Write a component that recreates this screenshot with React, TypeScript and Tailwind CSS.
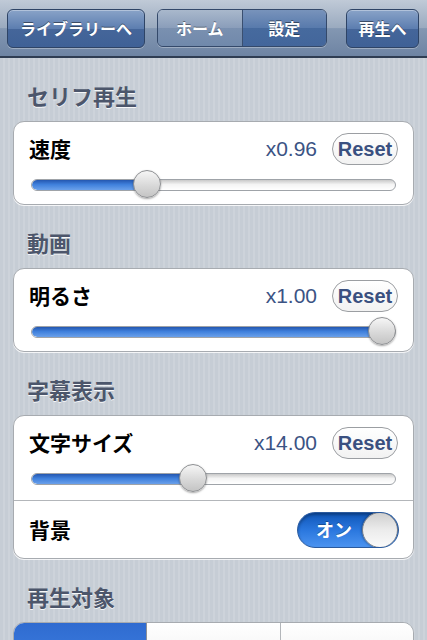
import type { ReactNode } from "react";

const JP = "font-['Noto_Sans_CJK_JP','Noto_Sans',sans-serif]";
const HV = "font-['Liberation_Sans','Noto_Sans_CJK_JP',sans-serif]";

function NavButton({ children, className = "" }: { children: ReactNode; className?: string }) {
  return (
    <button
      className={`${JP} h-[39px] rounded-[6px] border border-[#2e4466] bg-[linear-gradient(180deg,#89a3c8_0%,#5d7eb0_50%,#45669a_51%,#3f6196_100%)] text-[16px] font-bold text-white shadow-[inset_0_1px_0_rgba(255,255,255,0.35),0_1px_0_rgba(255,255,255,0.3)] [text-shadow:0_-1px_0_rgba(0,0,0,0.45)] ${className}`}
    >
      {children}
    </button>
  );
}

function NavBar() {
  return (
    <div className="flex h-[58px] items-center border-b-2 border-[#2f3d52] bg-[linear-gradient(180deg,#c0cad7_0%,#9aaabf_50%,#8397b2_51%,#6e84a3_100%)] px-[7px]">
      <NavButton className="w-[138px]">ライブラリーへ</NavButton>
      <div className="ml-[12px] flex h-[38px] w-[170px] overflow-hidden rounded-[6px] border border-[#34496a] shadow-[0_1px_0_rgba(255,255,255,0.3)]">
        <div
          className={`${JP} flex flex-1 items-center justify-center border-r border-[#3a4f70] bg-[linear-gradient(180deg,#a9b8cc_0%,#8a9dba_50%,#7a90b0_51%,#7089ab_100%)] text-[16px] font-bold text-white [text-shadow:0_-1px_0_rgba(0,0,0,0.4)]`}
        >
          ホーム
        </div>
        <div
          className={`${JP} flex flex-1 items-center justify-center bg-[linear-gradient(180deg,#7893bb_0%,#587aac_50%,#466a9e_51%,#43669b_100%)] text-[16px] font-bold text-white [text-shadow:0_-1px_0_rgba(0,0,0,0.45)]`}
        >
          設定
        </div>
      </div>
      <NavButton className="ml-[19px] w-[73px]">再生へ</NavButton>
    </div>
  );
}

function SectionHeader({ title }: { title: string }) {
  return (
    <div
      className={`${JP} pb-[14px] pl-[14px] pt-[25px] text-[22px] font-bold leading-[24px] text-[#4c566b] [text-shadow:0_1px_0_rgba(255,255,255,0.85)]`}
    >
      {title}
    </div>
  );
}

function Card({ children }: { children: ReactNode }) {
  return (
    <div className="overflow-hidden rounded-[11px] border border-[#a7abb0] bg-white shadow-[0_1px_0_rgba(255,255,255,0.8)]">
      {children}
    </div>
  );
}

function Slider({ frac }: { frac: number }) {
  const left = `calc(${frac} * (100% - 28px))`;
  const fill = `calc(${frac} * (100% - 28px) + 14px)`;
  return (
    <div className="relative mx-[2px] h-[28px]">
      <div className="absolute left-0 right-0 top-[9px] h-[12px] overflow-hidden rounded-full border border-[#9fa3a8] bg-[linear-gradient(180deg,#c9c9c9_0%,#f4f4f4_45%,#ffffff_100%)]">
        <div
          className="h-full rounded-l-full bg-[linear-gradient(180deg,#2457b0_0%,#3f80dc_45%,#6aa0ea_100%)]"
          style={{ width: fill }}
        />
      </div>
      <div
        className="absolute top-0 h-[28px] w-[28px] rounded-full border border-[#8d8f92] bg-[linear-gradient(180deg,#f6f6f6_0%,#d9d9d9_55%,#c4c4c4_100%)] shadow-[0_1px_2px_rgba(0,0,0,0.35)]"
        style={{ left }}
      />
    </div>
  );
}

function SliderRow({
  label,
  value,
  frac,
  bottom = "pb-[6px]",
}: {
  label: string;
  value: string;
  frac: number;
  bottom?: string;
}) {
  return (
    <div className={`px-[15px] pt-[11px] ${bottom}`}>
      <div className="flex h-[32px] items-center">
        <span className={`${JP} text-[21px] font-bold text-black`}>{label}</span>
        <span className={`${HV} ml-auto text-[21px] text-[#3b5384]`}>{value}</span>
        <button
          className={`${HV} ml-[15px] h-[32px] w-[66px] rounded-full border border-[#9b9ea2] bg-[linear-gradient(180deg,#ffffff_0%,#f2f2f2_100%)] text-[20px] font-bold text-[#3a5080]`}
        >
          Reset
        </button>
      </div>
      <div className="mt-[5px]">
        <Slider frac={frac} />
      </div>
    </div>
  );
}

function Toggle() {
  return (
    <div className="flex h-[36px] w-[102px] items-center overflow-hidden rounded-full border border-[#2a5a9e] bg-[linear-gradient(180deg,#0f56b8_0%,#2a77de_50%,#4b93f0_100%)] shadow-[inset_0_2px_3px_rgba(0,0,0,0.3)]">
      <span
        className={`${JP} flex-1 pl-[8px] text-center text-[18px] font-bold text-white [text-shadow:0_-1px_0_rgba(0,0,0,0.3)]`}
      >
        オン
      </span>
      <div className="h-[36px] w-[36px] rounded-full border border-[#7d8086] bg-[linear-gradient(180deg,#cfcfcf_0%,#ececec_50%,#fafafa_100%)] shadow-[-1px_0_2px_rgba(0,0,0,0.25)]" />
    </div>
  );
}

export default function App() {
  return (
    <div className="min-h-[640px] w-[427px] bg-[repeating-linear-gradient(90deg,#c6cdd5_0px,#c6cdd5_3px,#cdd3da_3px,#cdd3da_5px)]">
      <NavBar />
      <div className="px-[13px] pb-[20px]">
        <SectionHeader title="セリフ再生" />
        <Card>
          <SliderRow label="速度" value="x0.96" frac={0.304} />
        </Card>
        <SectionHeader title="動画" />
        <Card>
          <SliderRow label="明るさ" value="x1.00" frac={1} />
        </Card>
        <SectionHeader title="字幕表示" />
        <Card>
          <SliderRow label="文字サイズ" value="x14.00" frac={0.44} bottom="pb-[8px]" />
          <div className="h-px bg-[#b3b6ba]" />
          <div className="flex h-[57px] items-center pl-[15px] pr-[14px]">
            <span className={`${JP} text-[21px] font-bold text-black`}>背景</span>
            <div className="ml-auto">
              <Toggle />
            </div>
          </div>
        </Card>
        <SectionHeader title="再生対象" />
        <div className="flex h-[45px] overflow-hidden rounded-[11px] border border-[#a7abb0] bg-white">
          <div className="w-[133px] border-r border-[#8d9096] bg-[linear-gradient(180deg,#2f6bd0_0%,#3d7ee0_100%)]" />
          <div className="w-[134px] border-r border-[#b3b6ba] bg-[linear-gradient(180deg,#ffffff_0%,#f1f1f1_100%)]" />
          <div className="flex-1 bg-[linear-gradient(180deg,#ffffff_0%,#f1f1f1_100%)]" />
        </div>
      </div>
    </div>
  );
}
